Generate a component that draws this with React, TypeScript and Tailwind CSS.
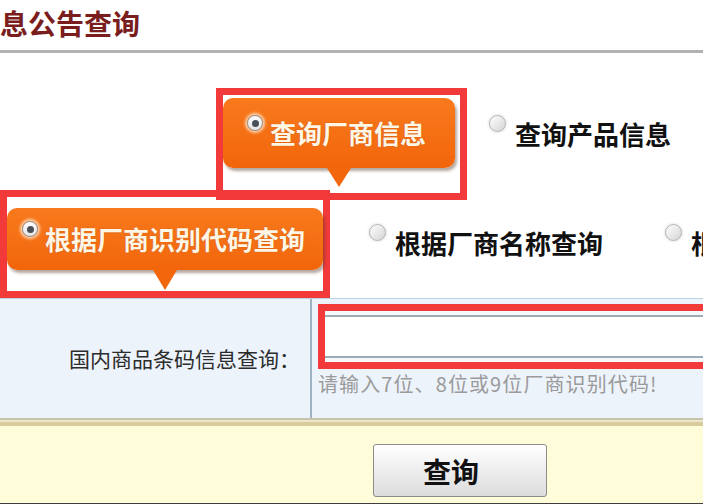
import React from 'react';

function Radio({ checked, onOrange }: { checked?: boolean; onOrange?: boolean }) {
  if (checked) {
    return (
      <span
        className={`flex h-[16px] w-[16px] shrink-0 items-center justify-center rounded-full border border-[#9a9a9a] bg-gradient-to-b from-[#ffffff] to-[#e4e4e4] ${
          onOrange ? 'shadow-[0_0_3px_2px_rgba(255,240,220,0.8)]' : ''
        }`}
      >
        <span className="block h-[7px] w-[7px] rounded-full bg-[#4a5058]" />
      </span>
    );
  }
  return (
    <span className="block h-[17px] w-[17px] shrink-0 rounded-full border border-[#b4b4b4] bg-gradient-to-br from-[#ffffff] to-[#d4d4d4] shadow-[0_0_2px_1px_rgba(230,230,230,0.9)]" />
  );
}

function Bubble({ label, width, height, padLeft, tail }: { label: string; width: string; height: string; padLeft: string; tail: string }) {
  return (
    <div className={`relative ${width}`}>
      <div
        className={`flex ${height} items-center ${padLeft} rounded-[10px] bg-gradient-to-b from-[#f87a1c] to-[#f2650a] shadow-[2px_3px_3px_rgba(90,60,40,0.45)]`}
      >
        <div className="flex items-start gap-[7px] whitespace-nowrap">
          <span className="-mt-[5px] block">
            <Radio checked onOrange />
          </span>
          <span className="text-[26px] font-bold leading-none text-[#fff6e6] [text-shadow:0_0_1px_#b05010]">{label}</span>
        </div>
      </div>
      <div
        className={`absolute left-1/2 top-full -translate-x-1/2 border-l-[12px] border-r-[12px] border-l-transparent border-r-transparent border-t-[#f2670b] ${tail}`}
      />
    </div>
  );
}

function Option({ label }: { label: string }) {
  return (
    <div className="flex shrink-0 items-start gap-[9px] whitespace-nowrap">
      <span className="-mt-[6px] block">
        <Radio />
      </span>
      <span className="text-[26px] font-bold leading-none text-[#111]">{label}</span>
    </div>
  );
}

export default function App() {
  return (
    <div
      className="relative h-[504px] w-[703px] overflow-hidden bg-white"
      style={{ fontFamily: '"Noto Sans CJK SC", "Liberation Sans", sans-serif' }}
    >
      <div className="h-[53px] border-b-[3px] border-[#b2b2b2] pt-[9px]">
        <h1 className="text-[28px] font-bold leading-none text-[#7a1d1d]">息公告查询</h1>
      </div>

      <div className="relative z-10 flex items-start pt-[35px]">
        <div className="ml-[216px] h-[112px] w-[251px] shrink-0 border-[7px] border-[#f33a3a] pt-[3px]">
          <Bubble label="查询厂商信息" width="w-[232px]" height="h-[70px]" padLeft="pl-[24px]" tail="border-t-[19px]" />
        </div>
        <div className="ml-[22px] mt-[33px]">
          <Option label="查询产品信息" />
        </div>
      </div>

      <div className="-mt-[10px] flex items-start">
        <div className="h-[108px] w-[330px] shrink-0 border-[7px] border-[#f33a3a] pt-[11px]">
          <Bubble label="根据厂商识别代码查询" width="w-[316px]" height="h-[62px]" padLeft="pl-[15px]" tail="border-t-[20px]" />
        </div>
        <div className="ml-[39px] mt-[40px] flex shrink-0 items-start gap-[62px]">
          <Option label="根据厂商名称查询" />
          <Option label="根据厂商名称地址查询" />
        </div>
      </div>

      <div className="flex h-[120px] border-t border-[#bdd2e2] bg-[#edf3fb]">
        <div className="flex w-[312px] shrink-0 items-center justify-end border-r-2 border-[#9fb2c2] pr-[10px]">
          <span className="whitespace-nowrap text-[21px] leading-none text-[#2c2c2c]">国内商品条码信息查询：</span>
        </div>
        <div className="flex flex-col pl-[6px] pt-[5px]">
          <div className="h-[65px] w-[392px] border-[7px] border-[#f33a3a] bg-[#f6f9fc] pt-[4px]">
            <div className="h-[43px] border-y-2 border-[#9eacb8] bg-white" />
          </div>
          <span className="mt-[5px] whitespace-nowrap text-[20px] leading-none tracking-[1.1px] text-[#9a9a9a]">请输入7位、8位或9位厂商识别代码!</span>
        </div>
      </div>

      <div className="h-[8px] border-t-2 border-b-[4px] border-t-[#c7c3ae] border-b-[#d8cc9c] bg-[#ece6c8]" />

      <div className="h-[79px] border-b-2 border-[#3e3e3e] bg-[#fffdd9] pl-[373px] pt-[18px]">
        <button className="flex h-[53px] w-[174px] items-center justify-center rounded-[3px] border border-[#8c8c8c] bg-gradient-to-b from-[#ffffff] to-[#dcdcdc] pr-[18px] text-[28px] font-bold leading-none text-[#111]">
          查询
        </button>
      </div>
    </div>
  );
}
